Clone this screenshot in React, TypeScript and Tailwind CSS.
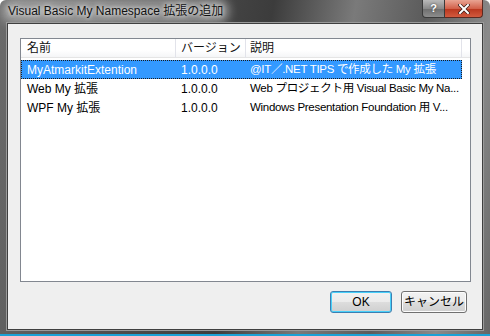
const font = "font-['Liberation_Sans','Noto_Sans_CJK_JP',sans-serif]"

const rows = [
  { name: "MyAtmarkitExtention", version: "1.0.0.0", desc: "@IT／.NET TIPS で作成した My 拡張", selected: true },
  { name: "Web My 拡張", version: "1.0.0.0", desc: "Web プロジェクト用 Visual Basic My Na...", selected: false },
  { name: "WPF My 拡張", version: "1.0.0.0", desc: "Windows Presentation Foundation 用 V...", selected: false },
]

export default function App() {
  return (
    <div className={`${font} flex h-[336px] w-[490px] flex-col overflow-hidden rounded-t-[6px] border-b-2 border-[#1ba1d6] bg-[linear-gradient(100deg,#6b6b6b_0%,#4a4a4a_35%,#3c3c3c_50%,#7a7a7a_65%,#5b5b5b_78%,#8a8a8a_90%,#666_100%)]`}>
      {/* Title bar */}
      <div className="flex h-[23px] shrink-0 items-start justify-between pl-[7px] pr-[7px]">
        <span className="mt-[3px] rounded-[8px] bg-[#cfcfcf]/40 px-[1px] text-[12px] leading-[16px] text-[#111] shadow-[0_0_10px_6px_rgba(210,210,210,0.45)] [text-shadow:0_0_4px_#fff,0_0_8px_#fff]">
          Visual Basic My Namespace 拡張の追加
        </span>
        <div className="flex">
          <div className="flex h-[18px] w-[23px] items-center justify-center rounded-bl-[4px] border border-t-0 border-[#3a3a3a] bg-[linear-gradient(#b9b9b9,#8a8a8a_50%,#6e6e6e_51%,#8c8c8c)] text-[11px] font-bold text-white [text-shadow:0_0_2px_#333]">
            ?
          </div>
          <div className="flex h-[18px] w-[38px] items-center justify-center rounded-br-[4px] border border-l-0 border-t-0 border-[#5a2a22] bg-[linear-gradient(#e9a493,#d2614a_50%,#b8351d_51%,#d25a3e)]">
            <svg width="12" height="10" viewBox="0 0 12 10">
              <path d="M2 1 L10 9 M10 1 L2 9" stroke="#3a1a14" strokeWidth="3.4" strokeLinecap="square" />
              <path d="M2 1 L10 9 M10 1 L2 9" stroke="#fff" strokeWidth="2" strokeLinecap="square" />
            </svg>
          </div>
        </div>
      </div>

      {/* Client area */}
      <div className="mx-[7px] mb-[4px] flex flex-1 flex-col border border-[#3f3f3f] bg-[#efefef] shadow-[0_0_0_1px_#9a9a9a]">
        <div className="ml-[12px] mt-[14px] flex h-[244px] w-[451px] flex-col border border-[#828790] bg-white">
          {/* Header */}
          <div className="flex h-[19px] items-stretch bg-[linear-gradient(#fff,#fff_60%,#f3f4f6)] text-[12px] leading-[19px] text-[#111] shadow-[inset_0_-1px_0_#e5e5e5]">
            <div className="w-[155px] border-r border-[#e2e3ea] pl-[6px]">名前</div>
            <div className="w-[70px] border-r border-[#e2e3ea] pl-[5px]">バージョン</div>
            <div className="w-[216px] border-r border-[#e2e3ea] pl-[4px]">説明</div>
            <div className="flex-1" />
          </div>
          {/* Rows */}
          <div className="mt-[2px] flex flex-col text-[12px] text-black">
            {rows.map((r) => (
              <div
                key={r.name}
                className={`flex h-[19px] w-[441px] items-center whitespace-nowrap ${
                  r.selected ? "border border-dotted border-[#1c1c1c] bg-[#3399ff] text-white" : "border border-transparent"
                }`}
              >
                <div className="w-[154px] overflow-hidden pl-[5px]">{r.name}</div>
                <div className="w-[70px] overflow-hidden pl-[5px]">{r.version}</div>
                <div className="flex-1 overflow-hidden pl-[4px] text-[11.5px] tracking-[-0.3px]">{r.desc}</div>
              </div>
            ))}
          </div>
        </div>

        {/* Buttons */}
        <div className="mr-[15px] mt-[9px] flex justify-end gap-[9px] text-[12px] text-black">
          <button className="h-[22px] w-[62px] rounded-[3px] border border-[#3c7fb1] bg-[linear-gradient(#f2f2f2,#ebebeb_50%,#dddddd_51%,#cfcfcf)] shadow-[inset_0_0_0_1px_#48d0fa]">
            OK
          </button>
          <button className="h-[22px] w-[66px] rounded-[3px] border border-[#707070] bg-[linear-gradient(#f2f2f2,#ebebeb_50%,#dddddd_51%,#cfcfcf)] shadow-[inset_0_0_0_1px_#fcfcfc]">
            キャンセル
          </button>
        </div>
      </div>
    </div>
  )
}
